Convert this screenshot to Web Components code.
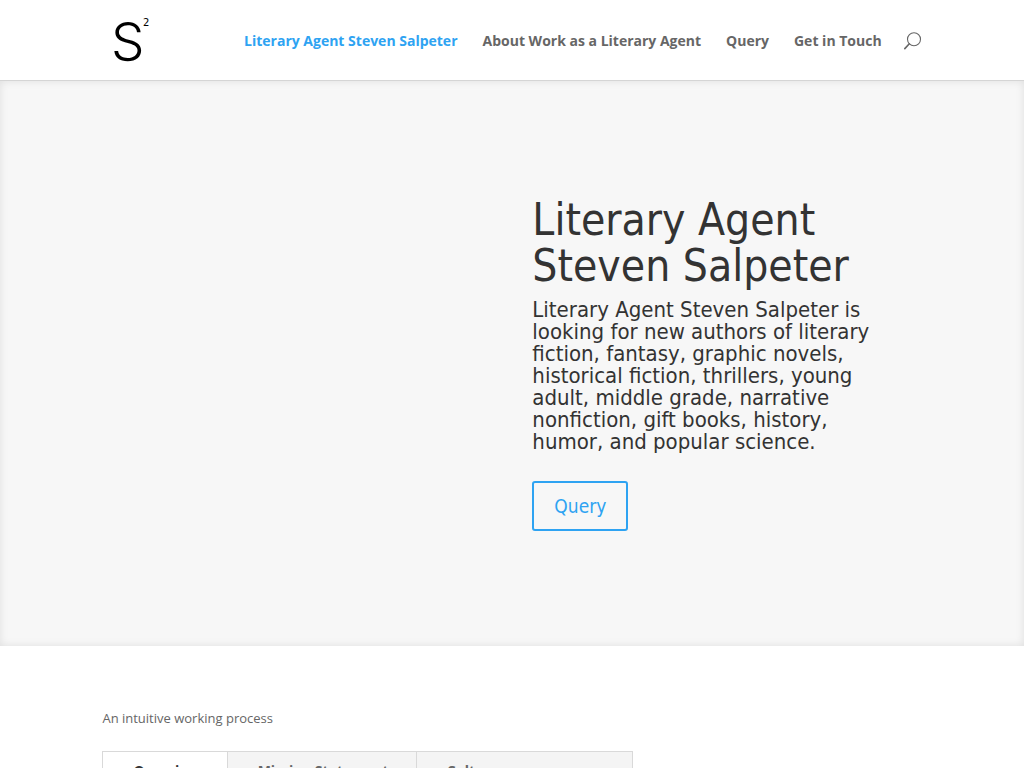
<!DOCTYPE html>
<html lang="en">
<head>
<meta charset="utf-8">
<meta name="viewport" content="width=device-width, initial-scale=1">
<title>Literary Agent Steven Salpeter</title>
<style>
  html { height: 100%; }
  body {
    margin: 0;
    height: 100%;
    overflow: hidden;
    background: #fff;
    color: #666;
    --accent: #2ea3f2;
    --heading: #333;
    --ui-font: "Open Sans", "Noto Sans", sans-serif;
    --display-font: "DejaVu Sans Condensed", "DejaVu Sans", sans-serif;
    font-family: var(--ui-font);
    font-size: 14px;
  }
</style>
</head>
<body>

<site-header>
  <site-logo slot="logo"></site-logo>
  <nav-link href="#home" active>Literary Agent Steven Salpeter</nav-link>
  <nav-link href="#about">About Work as a Literary Agent</nav-link>
  <nav-link href="#query">Query</nav-link>
  <nav-link href="#contact">Get in Touch</nav-link>
  <search-button slot="tools"></search-button>
</site-header>

<main>
  <hero-banner>
    <span slot="title">Literary Agent Steven Salpeter</span>
    Literary Agent Steven Salpeter is looking for new authors of literary fiction, fantasy, graphic novels, historical fiction, thrillers, young adult, middle grade, narrative nonfiction, gift books, history, humor, and popular science.
    <action-link slot="action" href="#query">Query</action-link>
  </hero-banner>

  <process-section>
    <span slot="intro">An intuitive working process</span>
    <tab-strip>
      <tab-item active>Overview</tab-item>
      <tab-item>Mission Statement</tab-item>
      <tab-item>Culture</tab-item>
    </tab-strip>
  </process-section>
</main>

<script>
const define = (name, html, setup) => {
  const template = document.createElement('template');
  template.innerHTML = html;
  customElements.define(name, class extends HTMLElement {
    constructor() {
      super();
      this.attachShadow({ mode: 'open' }).append(template.content.cloneNode(true));
    }
    connectedCallback() {
      if (setup) setup(this, this.shadowRoot);
    }
  });
};

const linkSetup = (host, root) => {
  root.querySelector('a').href = host.getAttribute('href') || '#';
};

define('site-logo', `
  <style>
    :host { display: block; }
    a { display: block; color: #000; text-decoration: none; }
    svg { display: block; }
    .base { font: 300 53px Inter, sans-serif; }
    .power { font: 10px "DejaVu Sans", sans-serif; }
  </style>
  <a href="#home" aria-label="Home">
    <svg width="54" height="54" viewBox="0 0 54 54" fill="currentColor">
      <text class="base" x="9" y="48">S</text>
      <text class="power" x="41" y="13">2</text>
    </svg>
  </a>`);

define('nav-link', `
  <style>
    :host { display: block; }
    a { color: #666; font-weight: 700; font-size: 14px; line-height: 20px; text-decoration: none; white-space: nowrap; }
    :host([active]) a { color: var(--accent); }
  </style>
  <a><slot></slot></a>`, linkSetup);

define('search-button', `
  <style>
    :host { display: block; }
    button { display: block; padding: 0; border: 0; background: none; color: #666; cursor: pointer; }
    svg { display: block; }
  </style>
  <button type="button" aria-label="Search">
    <svg width="18" height="18" viewBox="0 0 18 18" fill="none" stroke="currentColor" stroke-width="1.1" stroke-linecap="round">
      <circle cx="10" cy="7.2" r="6.5"/>
      <path d="M5.3 11.8.8 16.6" stroke-width="1.6"/>
    </svg>
  </button>`);

define('site-header', `
  <style>
    :host { display: block; border-bottom: 1px solid #d5d5d5; background: #fff; }
    .bar { display: flex; align-items: center; justify-content: space-between; width: 80%; height: 80px; margin: 0 auto; }
    .right { display: flex; align-items: center; gap: 22px; padding-top: 2px; }
    nav { display: flex; gap: 25px; }
  </style>
  <header class="bar">
    <slot name="logo"></slot>
    <div class="right">
      <nav><slot></slot></nav>
      <slot name="tools"></slot>
    </div>
  </header>`);

define('action-link', `
  <style>
    :host { display: inline-block; }
    a { display: block; padding: 6px 20px; border: 2px solid var(--accent); border-radius: 3px;
        color: var(--accent); font-family: var(--display-font); font-size: 19px; line-height: 34px; text-decoration: none; }
  </style>
  <a><slot></slot></a>`, linkSetup);

define('hero-banner', `
  <style>
    :host { display: block; background: #f7f7f7; box-shadow: inset 0 0 8px rgba(0, 0, 0, .1); color: var(--heading); }
    .inner { display: flex; justify-content: flex-end; width: 80%; margin: 0 auto; padding: 116px 0 115px; }
    .copy { width: 43%; margin-right: 37px; font-family: var(--display-font); }
    h1 { margin: 0; padding-bottom: 10px; font-size: 44px; line-height: 46px; font-weight: 400; }
    p { margin: 0 0 28px; font-size: 22px; line-height: 22px; }
  </style>
  <section class="inner">
    <div class="copy">
      <h1><slot name="title"></slot></h1>
      <p><slot></slot></p>
      <slot name="action"></slot>
    </div>
  </section>`);

define('process-section', `
  <style>
    :host { display: block; }
    section { width: 80%; margin: 0 auto; padding: 60px 0; }
    p { margin: 0 0 21px; font-size: 13px; line-height: 24px; }
    .column { box-sizing: border-box; width: 65%; padding-right: 2px; }
  </style>
  <section>
    <p><slot name="intro"></slot></p>
    <div class="column"><slot></slot></div>
  </section>`);

define('tab-strip', `
  <style>
    :host { display: block; border: 1px solid #d9d9d9; background: #f4f4f4; }
    div { display: flex; }
  </style>
  <div role="tablist"><slot></slot></div>`);

define('tab-item', `
  <style>
    :host { display: block; border-right: 1px solid #d9d9d9; }
    :host(:last-child) { border-right: 0; }
    button { display: block; padding: 7px 27px 7px 30px; border: 0; background: none; color: #666;
             font: 700 14px/24px var(--ui-font); white-space: nowrap; cursor: pointer; }
    :host([active]) button { background: #fff; color: #333; }
  </style>
  <button type="button" role="tab"><slot></slot></button>`, (host, root) => {
    root.querySelector('button').setAttribute('aria-selected', host.hasAttribute('active'));
  });
</script>
</body>
</html>
